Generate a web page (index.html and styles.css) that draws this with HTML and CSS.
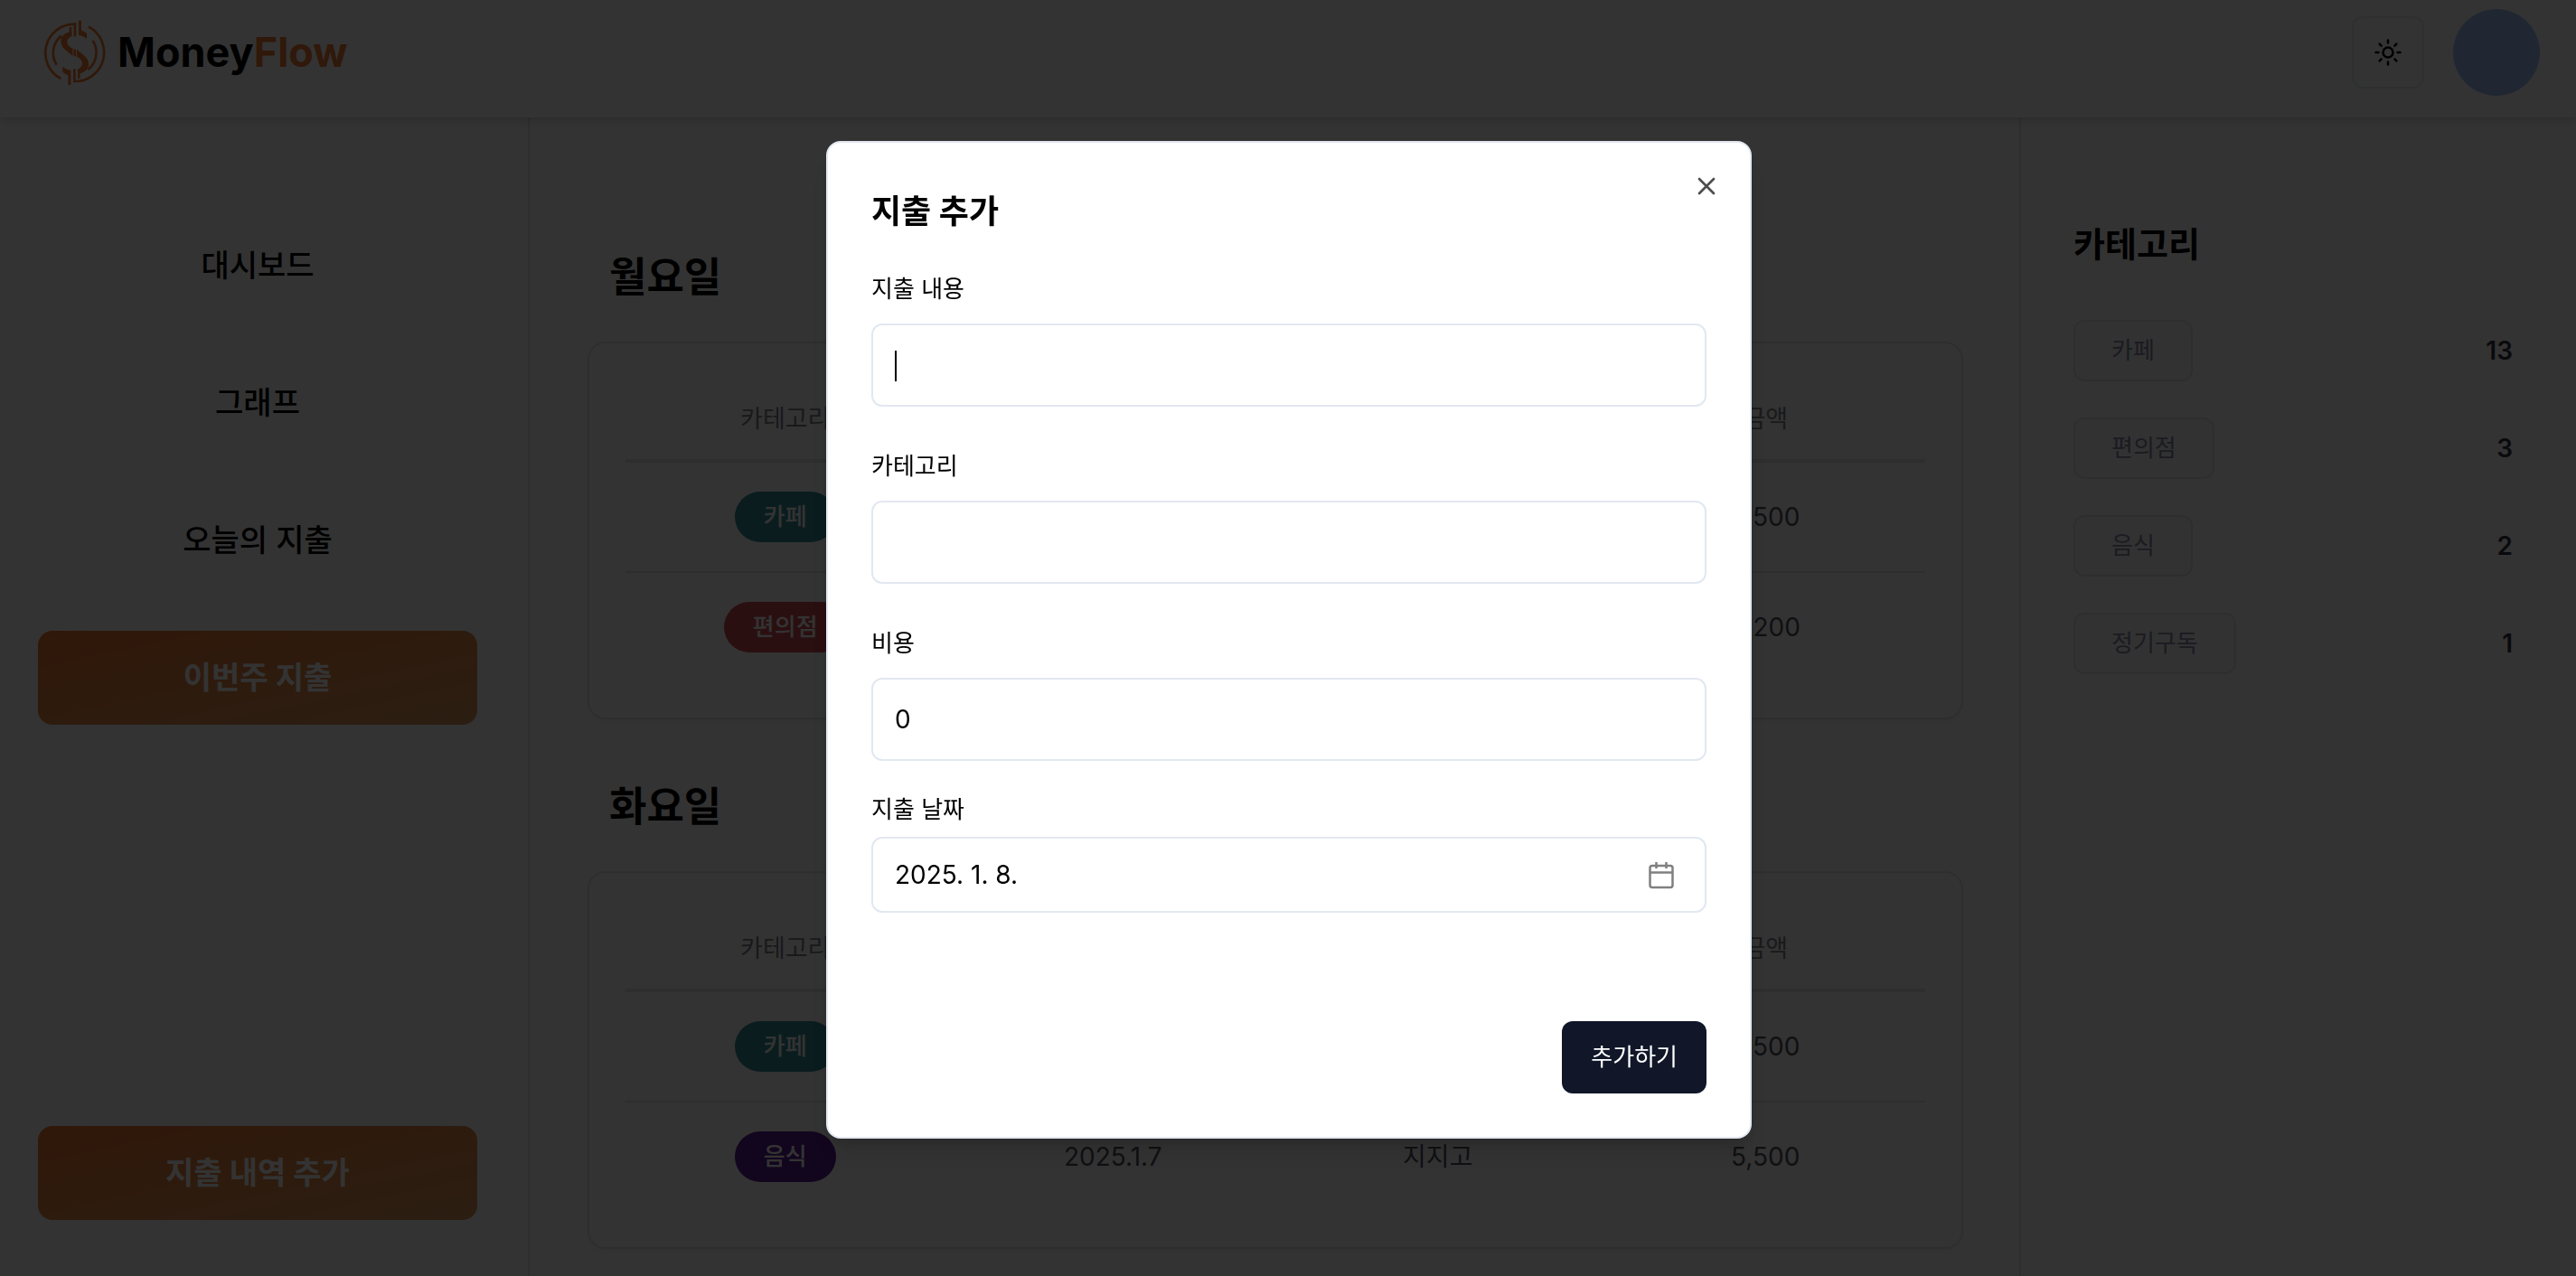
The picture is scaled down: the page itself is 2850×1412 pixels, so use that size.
FILE: index.html
```html
<!DOCTYPE html>
<html lang="ko">
<head>
<meta charset="utf-8">
<meta name="viewport" content="width=device-width, initial-scale=1">
<title>MoneyFlow</title>
<link rel="stylesheet" href="styles.css">
</head>
<body>
<div class="app">
  <header class="header">
    <a class="brand" href="#">
      <svg class="brand-mark" viewBox="24 30 210 222" aria-hidden="true">
        <defs>
          <g id="coin-half">
            <path class="ring" d="M129 88V47A96 96 0 0 0 82 228"/>
            <path class="ring" d="M68 182A72 72 0 0 1 84 86"/>
            <path class="ring" d="M114 88V57"/>
            <path class="solid" d="M118 72C96 74 80 88 82 106C84 130 108 138 121 154V128C108 122 102 114 103 105C104 96 110 90 118 86Z"/>
            <path class="solid" d="M141 35H150V68C157 70 162 73 168 78V96C160 89 151 86 141 84Z"/>
          </g>
        </defs>
        <use href="#coin-half"/>
        <use href="#coin-half" transform="rotate(180 128 142)"/>
        <path class="solid" d="M124 128L132 133V156L124 151Z"/>
      </svg>
      <span class="brand-name">Money<span class="brand-accent">Flow</span></span>
    </a>
    <div class="header-actions">
      <button class="theme-button" type="button" aria-label="테마 변경">
        <svg class="theme-icon" viewBox="0 0 32 32" aria-hidden="true">
          <circle cx="16" cy="16" r="5.5"/>
          <path d="M16 2.5v3M16 26.5v3M2.500 16h3M26.500 16h3M6.600 6.600l2 2M23.400 23.400l2 2M6.600 25.400l2-2M23.400 8.600l2-2"/>
        </svg>
      </button>
      <button class="avatar" type="button" aria-label="내 계정"></button>
    </div>
  </header>

  <div class="body">
    <aside class="sidebar">
      <nav class="nav">
        <a class="nav-item" href="#">대시보드</a>
        <a class="nav-item" href="#">그래프</a>
        <a class="nav-item" href="#">오늘의 지출</a>
        <a class="nav-item filled" href="#">이번주 지출</a>
      </nav>
      <button class="nav-item filled" type="button">지출 내역 추가</button>
    </aside>

    <main class="main">
      <section class="day">
        <h2 class="day-title">월요일</h2>
        <div class="card">
          <table class="expenses">
            <thead><tr><th>카테고리</th><th>날짜</th><th>내용</th><th>금액</th></tr></thead>
            <tbody>
              <tr><td><span class="pill teal">카페</span></td><td>2025.1.6</td><td>커피</td><td>5,500</td></tr>
              <tr><td><span class="pill red">편의점</span></td><td>2025.1.6</td><td>간식</td><td>3,200</td></tr>
            </tbody>
          </table>
        </div>
      </section>
      <section class="day">
        <h2 class="day-title">화요일</h2>
        <div class="card">
          <table class="expenses">
            <thead><tr><th>카테고리</th><th>날짜</th><th>내용</th><th>금액</th></tr></thead>
            <tbody>
              <tr><td><span class="pill teal">카페</span></td><td>2025.1.7</td><td>커피</td><td>5,500</td></tr>
              <tr><td><span class="pill purple">음식</span></td><td>2025.1.7</td><td>지지고</td><td>5,500</td></tr>
            </tbody>
          </table>
        </div>
      </section>
    </main>

    <aside class="categories">
      <h2 class="categories-title">카테고리</h2>
      <ul class="category-list">
        <li class="category"><span class="tag">카페</span><span class="count">13</span></li>
        <li class="category"><span class="tag">편의점</span><span class="count">3</span></li>
        <li class="category"><span class="tag">음식</span><span class="count">2</span></li>
        <li class="category"><span class="tag">정기구독</span><span class="count">1</span></li>
      </ul>
    </aside>
  </div>
</div>

<div class="overlay">
  <div class="modal" role="dialog" aria-modal="true" aria-labelledby="modal-title">
    <button class="close" type="button" aria-label="닫기">
      <svg class="close-icon" viewBox="0 0 24 24" aria-hidden="true"><path d="M18 6 6 18M6 6l12 12"/></svg>
    </button>
    <h2 class="modal-title" id="modal-title">지출 추가</h2>
    <form class="form">
      <div class="field">
        <label class="label" for="content">지출 내용</label>
        <div class="control focused"><input class="input" id="content" type="text"></div>
      </div>
      <div class="field">
        <label class="label" for="category">카테고리</label>
        <div class="control"><input class="input" id="category" type="text"></div>
      </div>
      <div class="field">
        <label class="label" for="cost">비용</label>
        <div class="control"><input class="input" id="cost" type="text" inputmode="numeric" value="0"></div>
      </div>
      <div class="field date-field">
        <label class="label" for="date">지출 날짜</label>
        <div class="control">
          <input class="input" id="date" type="text" value="2025. 1. 8.">
          <svg class="calendar-icon" viewBox="0 0 32 32" aria-hidden="true">
            <rect x="3.5" y="6" width="25" height="24" rx="2.5"/>
            <path d="M3.5 13.5h25M10.500 2v7M21.500 2v7"/>
          </svg>
        </div>
      </div>
      <button class="submit" type="submit">추가하기</button>
    </form>
  </div>
</div>
</body>
</html>
```

FILE: styles.css
```css
* { box-sizing: border-box; }

body {
  margin: 0;
  background: #fff;
  color: #000;
  font-family: Inter, "Noto Sans CJK KR", sans-serif;
  font-size: 28px;
  line-height: 40px;
}

button, input { font: inherit; color: inherit; }
button { cursor: pointer; }
a { color: inherit; text-decoration: none; }
h2 { margin: 0; }

.app {
  display: flex;
  flex-direction: column;
  height: 100vh;
  overflow: hidden;
}

.header {
  position: relative;
  display: flex;
  flex: none;
  align-items: center;
  justify-content: space-between;
  padding: 10px 40px 24px 48px;
  background: #fff;
  box-shadow: 0 2px 12px rgba(0, 0, 0, 0.2);
}

.brand { display: flex; align-items: center; gap: 12px; }
.brand-mark { width: 70px; height: 74px; }
.ring { fill: none; stroke: #f07832; stroke-width: 8; }
.solid { fill: #f07832; }
.brand-name { font-size: 45px; font-weight: 700; line-height: 56px; }
.brand-accent { color: #f07832; }

.header-actions { display: flex; align-items: center; gap: 32px; }

.theme-button {
  display: flex;
  align-items: center;
  justify-content: center;
  width: 80px;
  height: 80px;
  padding: 0;
  background: #fff;
  border: 2px solid #e2e8f0;
  border-radius: 12px;
}

.theme-icon {
  width: 32px;
  height: 32px;
  fill: none;
  stroke: #000;
  stroke-width: 2.5;
  stroke-linecap: round;
}

.avatar {
  width: 96px;
  height: 96px;
  padding: 0;
  background: #a0c3fa;
  border: 0;
  border-radius: 50%;
}

.body { display: flex; flex: 1; min-height: 0; }

.sidebar {
  display: flex;
  flex: none;
  flex-direction: column;
  justify-content: space-between;
  width: 586px;
  padding: 112px 56px 62px 42px;
  border-right: 2px solid #e5e5e5;
}

.nav { display: flex; flex-direction: column; gap: 48px; }

.nav-item {
  display: flex;
  align-items: center;
  justify-content: center;
  height: 104px;
  padding: 0;
  border: 0;
  border-radius: 16px;
  font-size: 34px;
  font-weight: 500;
}

.filled {
  background: linear-gradient(to bottom right, #ee7530, #d6965a);
  color: #fff;
  font-weight: 700;
}

.main { flex: 1; min-width: 0; padding: 144px 62px 0 64px; overflow: hidden; }
.day { margin-bottom: 64px; }

.day-title {
  margin-bottom: 38px;
  padding-left: 24px;
  font-size: 45px;
  font-weight: 700;
  line-height: 66px;
}

.card {
  padding: 40px;
  border: 2px solid #e5e5e5;
  border-radius: 20px;
  box-shadow: 0 2px 4px rgba(0, 0, 0, 0.06);
}

.expenses {
  width: 100%;
  border-collapse: separate;
  border-spacing: 0;
  table-layout: fixed;
  text-align: center;
}

.expenses th {
  height: 92px;
  padding: 0;
  border-bottom: 4px solid #e5e5e5;
  color: #7f7f86;
  font-size: 27px;
  font-weight: 400;
}

.expenses td { height: 120px; padding: 0; color: #50505c; }
.expenses tbody tr:first-child td { height: 122px; border-bottom: 2px solid #e5e5e5; }

/* the outer columns lean towards the card's edges */
.expenses tr :first-child { padding-right: 6px; }
.expenses tr :last-child { padding-left: 6px; }

.expenses .pill {
  display: inline-block;
  padding: 8px 32px;
  border-radius: 28px;
  color: #fff;
  font-size: 26px;
  font-weight: 500;
  vertical-align: middle;
}

.expenses tr .pill { padding: 8px 32px; }

.teal { background: #328c96; }
.red { background: #d24b55; }
.purple { background: #5a1996; }

.categories {
  flex: none;
  width: 616px;
  padding: 112px 70px 0 58px;
  border-left: 2px solid #e5e5e5;
}

.categories-title { font-size: 38px; font-weight: 700; line-height: 56px; }

.category-list {
  display: flex;
  flex-direction: column;
  gap: 40px;
  margin: 56px 0 0;
  padding: 0;
  list-style: none;
}

.category { display: flex; align-items: center; justify-content: space-between; }

.tag {
  padding: 12px 40px;
  border: 2px solid #e5e5e5;
  border-radius: 12px;
  background: #fafafa;
  color: #8888a5;
  font-size: 26px;
}

.count { color: #323241; font-weight: 600; }

.overlay {
  position: fixed;
  inset: 0;
  display: flex;
  align-items: center;
  justify-content: center;
  padding: 4px 0 0 2px;
  background: rgba(0, 0, 0, 0.8);
}

.modal {
  position: relative;
  width: 1024px;
  max-width: 100%;
  padding: 48px;
  background: #fff;
  border: 2px solid #e2e8f0;
  border-radius: 16px;
  box-shadow: 0 20px 30px rgba(0, 0, 0, 0.1), 0 8px 12px rgba(0, 0, 0, 0.1);
}

.close {
  position: absolute;
  top: 32px;
  right: 32px;
  display: flex;
  padding: 0;
  background: none;
  border: 0;
}

.close-icon {
  width: 32px;
  height: 32px;
  fill: none;
  stroke: #4d4d4d;
  stroke-width: 2;
  stroke-linecap: round;
}

.modal-title { font-size: 36px; font-weight: 700; line-height: 56px; }
.form { display: flex; flex-direction: column; margin-top: 38px; }
.field { margin-bottom: 46px; }
.label { display: block; margin-bottom: 18px; font-size: 26px; font-weight: 400; }
.control { position: relative; }

.input {
  display: block;
  width: 100%;
  height: 92px;
  padding: 0 24px;
  background: #fff;
  border: 2px solid #e2e8f0;
  border-radius: 12px;
  outline: 0;
}

/* insertion caret of the active text box */
.focused::after {
  content: "";
  position: absolute;
  top: 30px;
  left: 26px;
  width: 2px;
  height: 34px;
  background: #000;
}

.date-field { margin: -12px 0 120px; }
.date-field .label { margin-bottom: 10px; }
.date-field .input { height: 84px; }

.calendar-icon {
  position: absolute;
  top: 26px;
  right: 34px;
  width: 32px;
  height: 32px;
  fill: none;
  stroke: #808080;
  stroke-width: 2.5;
}

.submit {
  align-self: flex-end;
  height: 80px;
  padding: 0 32px;
  background: #111729;
  border: 0;
  border-radius: 12px;
  color: #fff;
  font-size: 26px;
  font-weight: 400;
}
```
